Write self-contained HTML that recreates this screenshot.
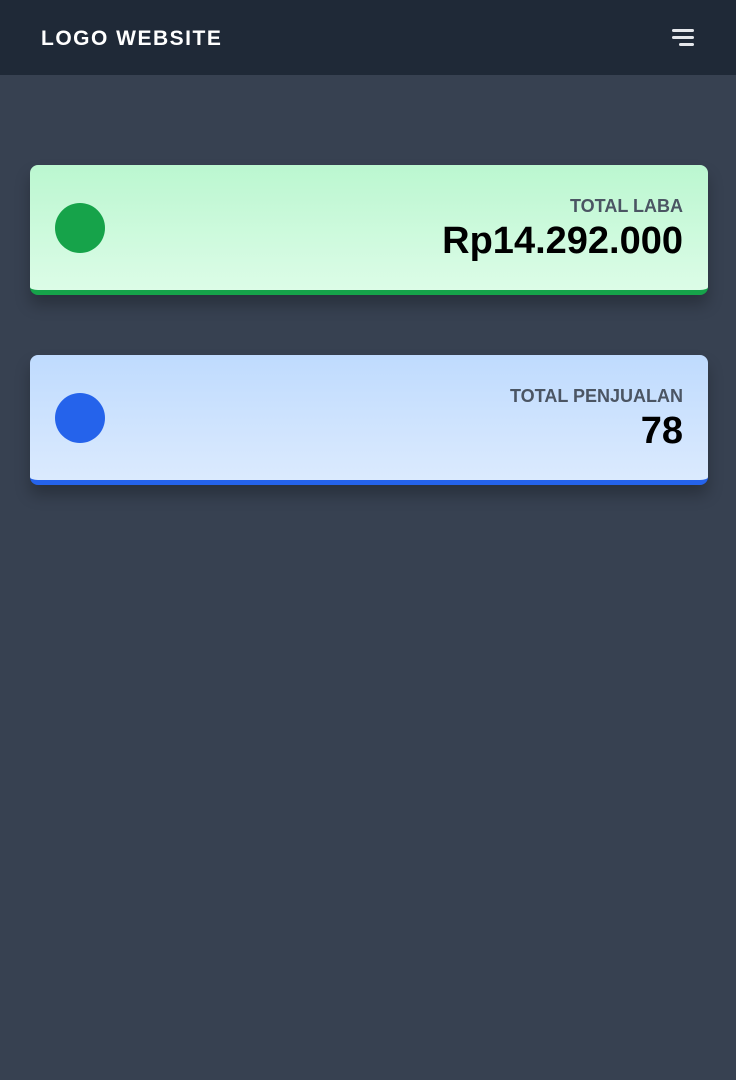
<!DOCTYPE html>
<html><head><meta charset="utf-8"><style>
*{margin:0;padding:0;box-sizing:border-box}
body{width:736px;height:1080px;background:#374151;font-family:"Liberation Sans",sans-serif;overflow:hidden}
.hdr{height:75px;background:#1f2937;position:relative}
.logo{position:absolute;left:41px;top:27px;color:#fff;font-weight:bold;font-size:21px;letter-spacing:1.5px}
.hb{position:absolute;left:672px;top:29px;width:22px}
.hb i{display:block;height:3px;background:#e5e7eb;border-radius:2px;margin-bottom:4px;margin-left:auto}
.card{position:absolute;left:30px;width:678px;height:130px;border-radius:8px;box-shadow:0 10px 15px rgba(0,0,0,.25)}
.dot{position:absolute;left:25px;top:38px;width:50px;height:50px;border-radius:50%}
.lab{position:absolute;right:25px;top:31px;font-weight:bold;font-size:18px;color:#4b5563;text-align:right}
.val{position:absolute;right:25px;top:55px;font-weight:bold;font-size:38px;color:#000;letter-spacing:0}
</style></head><body>
<div class="hdr"><div class="logo">LOGO WEBSITE</div>
<div class="hb"><i style="width:22px"></i><i style="width:22px"></i><i style="width:15px"></i></div></div>
<div class="card" style="top:165px;background:linear-gradient(#bbf7d0,#dcfce7);border-bottom:5px solid #16a34a">
<div class="dot" style="background:#16a34a"></div><div class="lab">TOTAL LABA</div><div class="val">Rp14.292.000</div></div>
<div class="card" style="top:355px;background:linear-gradient(#bfdbfe,#dbeafe);border-bottom:5px solid #2563eb">
<div class="dot" style="background:#2563eb"></div><div class="lab">TOTAL PENJUALAN</div><div class="val">78</div></div>
</body></html>
